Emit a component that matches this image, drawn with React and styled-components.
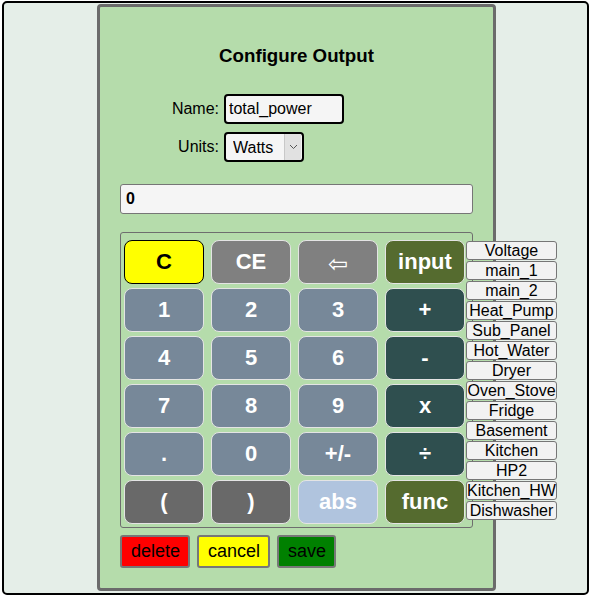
import React from "react";
import styled, { createGlobalStyle } from "styled-components";

const GlobalStyle = createGlobalStyle`
  html, body { margin: 0; padding: 0; background: #ffffff; }
  body { font-family: "Liberation Sans", Arial, sans-serif; }
  * { box-sizing: border-box; }
`;

const Frame = styled.div`
  margin: 1px 0 0 2px;
  width: 587px;
  height: 594px;
  border: 2px solid #000;
  border-radius: 5px;
  background: #e5eee8;
  padding: 1px 0 0 93px;
`;

const Panel = styled.div`
  width: 399px;
  height: 587px;
  border: 3px solid #6b6b6b;
  border-radius: 4px;
  background: #b5dcab;
  padding: 0 20px;
  display: flex;
  flex-direction: column;
`;

const Title = styled.h2`
  margin: 38px 0 0;
  height: 22px;
  line-height: 22px;
  font-size: 18.72px;
  font-weight: bold;
  text-align: center;
  color: #000;
`;

const Form = styled.div`
  margin-top: 27px;
  display: grid;
  grid-template-columns: 99px auto;
  column-gap: 5px;
  row-gap: 8px;
  align-items: center;
  justify-items: start;
`;

const Label = styled.label`
  justify-self: end;
  font-size: 16px;
  color: #000;
`;

const TextInput = styled.input`
  width: 120px;
  height: 30px;
  border: 2px solid #000;
  border-radius: 4px;
  background: #f5f5f5;
  font-family: inherit;
  font-size: 16px;
  padding: 0 3px;
  color: #000;
  outline: none;
`;

const SelectBox = styled.div`
  width: 80px;
  height: 30px;
  border: 2px solid #000;
  border-radius: 4px;
  background: #f5f5f5;
  display: flex;
  align-items: stretch;
  overflow: hidden;
`;

const Select = styled.select`
  flex: 1;
  min-width: 0;
  appearance: none;
  border: none;
  background: transparent;
  font-family: inherit;
  font-size: 16px;
  padding: 0 0 0 7px;
  color: #000;
  outline: none;
`;

const Arrow = styled.span`
  width: 17px;
  margin: 0 1px 0 0;
  background: #e1e1e1;
  border-left: 1px solid #c8c8c8;
  display: flex;
  align-items: center;
  justify-content: center;
`;

const Display = styled.input`
  margin-top: 22px;
  width: 353px;
  height: 30px;
  border: 1px solid #767676;
  border-radius: 3px;
  background: #f5f5f5;
  font-family: inherit;
  font-size: 16px;
  font-weight: bold;
  padding: 0 5px;
  color: #000;
  outline: none;
`;

const CalcRow = styled.div`
  margin-top: 18px;
  display: flex;
  align-items: flex-start;
`;

const CalcBox = styled.div`
  width: 353px;
  flex-shrink: 0;
  border: 1px solid #6e6e6e;
  border-radius: 3px;
  padding: 7px 7px 3px 3px;
  display: grid;
  grid-template-columns: repeat(4, 80px);
  grid-auto-rows: 44px;
  column-gap: 7px;
  row-gap: 4px;
`;

const Key = styled.button`
  border: 1px solid ${(p) => (p.$dark ? "#000" : "#e4e4e4")};
  border-radius: 8px;
  background: ${(p) => p.$bg};
  color: ${(p) => p.$fg};
  font-family: inherit;
  font-size: ${(p) => p.$size || 22}px;
  font-weight: ${(p) => (p.$normal ? "normal" : "bold")};
  padding: ${(p) => (p.$normal ? "4px 0 0" : "0")};
  display: flex;
  align-items: center;
  justify-content: center;
  cursor: pointer;
`;

const VarList = styled.div`
  margin: 9px 0 0 -7px;
  display: flex;
  flex-direction: column;
  gap: 1px;
  position: relative;
`;

const VarButton = styled.button`
  width: 91px;
  height: 19px;
  border: 1px solid #767676;
  border-radius: 3px;
  background: #f2f2f2;
  color: #000;
  font-family: inherit;
  font-size: 16px;
  line-height: 16px;
  padding: 0;
  white-space: nowrap;
  overflow: visible;
  display: flex;
  align-items: center;
  justify-content: center;
`;

const Actions = styled.div`
  margin-top: 7px;
  display: flex;
  gap: 7px;
`;

const ActionButton = styled.button`
  height: 33px;
  border: 2px solid #777;
  border-radius: 3px;
  background: ${(p) => p.$bg};
  color: #000;
  font-family: inherit;
  font-size: 18px;
  padding: 0 8px 0 9px;
`;

const OLIVE = "#556b2f";
const SLATE = "#778899";
const DARKSLATE = "#2f4f4f";
const GRAY = "#808080";
const DIM = "#696969";

const keys = [
  { t: "C", bg: "#ffff00", fg: "#000", dark: true },
  { t: "CE", bg: GRAY, fg: "#fff" },
  { t: "⇦", bg: GRAY, fg: "#fff", normal: true, size: 24 },
  { t: "input", bg: OLIVE, fg: "#fff" },
  { t: "1", bg: SLATE, fg: "#fff" },
  { t: "2", bg: SLATE, fg: "#fff" },
  { t: "3", bg: SLATE, fg: "#fff" },
  { t: "+", bg: DARKSLATE, fg: "#fff" },
  { t: "4", bg: SLATE, fg: "#fff" },
  { t: "5", bg: SLATE, fg: "#fff" },
  { t: "6", bg: SLATE, fg: "#fff" },
  { t: "-", bg: DARKSLATE, fg: "#fff" },
  { t: "7", bg: SLATE, fg: "#fff" },
  { t: "8", bg: SLATE, fg: "#fff" },
  { t: "9", bg: SLATE, fg: "#fff" },
  { t: "x", bg: DARKSLATE, fg: "#fff" },
  { t: ".", bg: SLATE, fg: "#fff" },
  { t: "0", bg: SLATE, fg: "#fff" },
  { t: "+/-", bg: SLATE, fg: "#fff" },
  { t: "÷", bg: DARKSLATE, fg: "#fff" },
  { t: "(", bg: DIM, fg: "#fff" },
  { t: ")", bg: DIM, fg: "#fff" },
  { t: "abs", bg: "#b0c4de", fg: "#fff" },
  { t: "func", bg: OLIVE, fg: "#fff" },
];

const vars = [
  "Voltage",
  "main_1",
  "main_2",
  "Heat_Pump",
  "Sub_Panel",
  "Hot_Water",
  "Dryer",
  "Oven_Stove",
  "Fridge",
  "Basement",
  "Kitchen",
  "HP2",
  "Kitchen_HW",
  "Dishwasher",
];

export default function App() {
  return (
    <>
      <GlobalStyle />
      <Frame>
        <Panel>
          <Title>Configure Output</Title>
          <Form>
            <Label>Name:</Label>
            <TextInput defaultValue="total_power" />
            <Label>Units:</Label>
            <SelectBox>
              <Select defaultValue="Watts">
                <option>Watts</option>
                <option>Amps</option>
                <option>Volts</option>
              </Select>
              <Arrow>
                <svg width="9" height="6" viewBox="0 0 9 6">
                  <path d="M1 1 L4.5 4.5 L8 1" fill="none" stroke="#555" strokeWidth="1" />
                </svg>
              </Arrow>
            </SelectBox>
          </Form>
          <Display defaultValue="0" />
          <CalcRow>
            <CalcBox>
              {keys.map((k) => (
                <Key
                  key={k.t}
                  $bg={k.bg}
                  $fg={k.fg}
                  $dark={k.dark}
                  $normal={k.normal}
                  $size={k.size}
                >
                  {k.t}
                </Key>
              ))}
            </CalcBox>
            <VarList>
              {vars.map((v) => (
                <VarButton key={v}>{v}</VarButton>
              ))}
            </VarList>
          </CalcRow>
          <Actions>
            <ActionButton $bg="#ff0000">delete</ActionButton>
            <ActionButton $bg="#ffff00">cancel</ActionButton>
            <ActionButton $bg="#008000">save</ActionButton>
          </Actions>
        </Panel>
      </Frame>
    </>
  );
}
